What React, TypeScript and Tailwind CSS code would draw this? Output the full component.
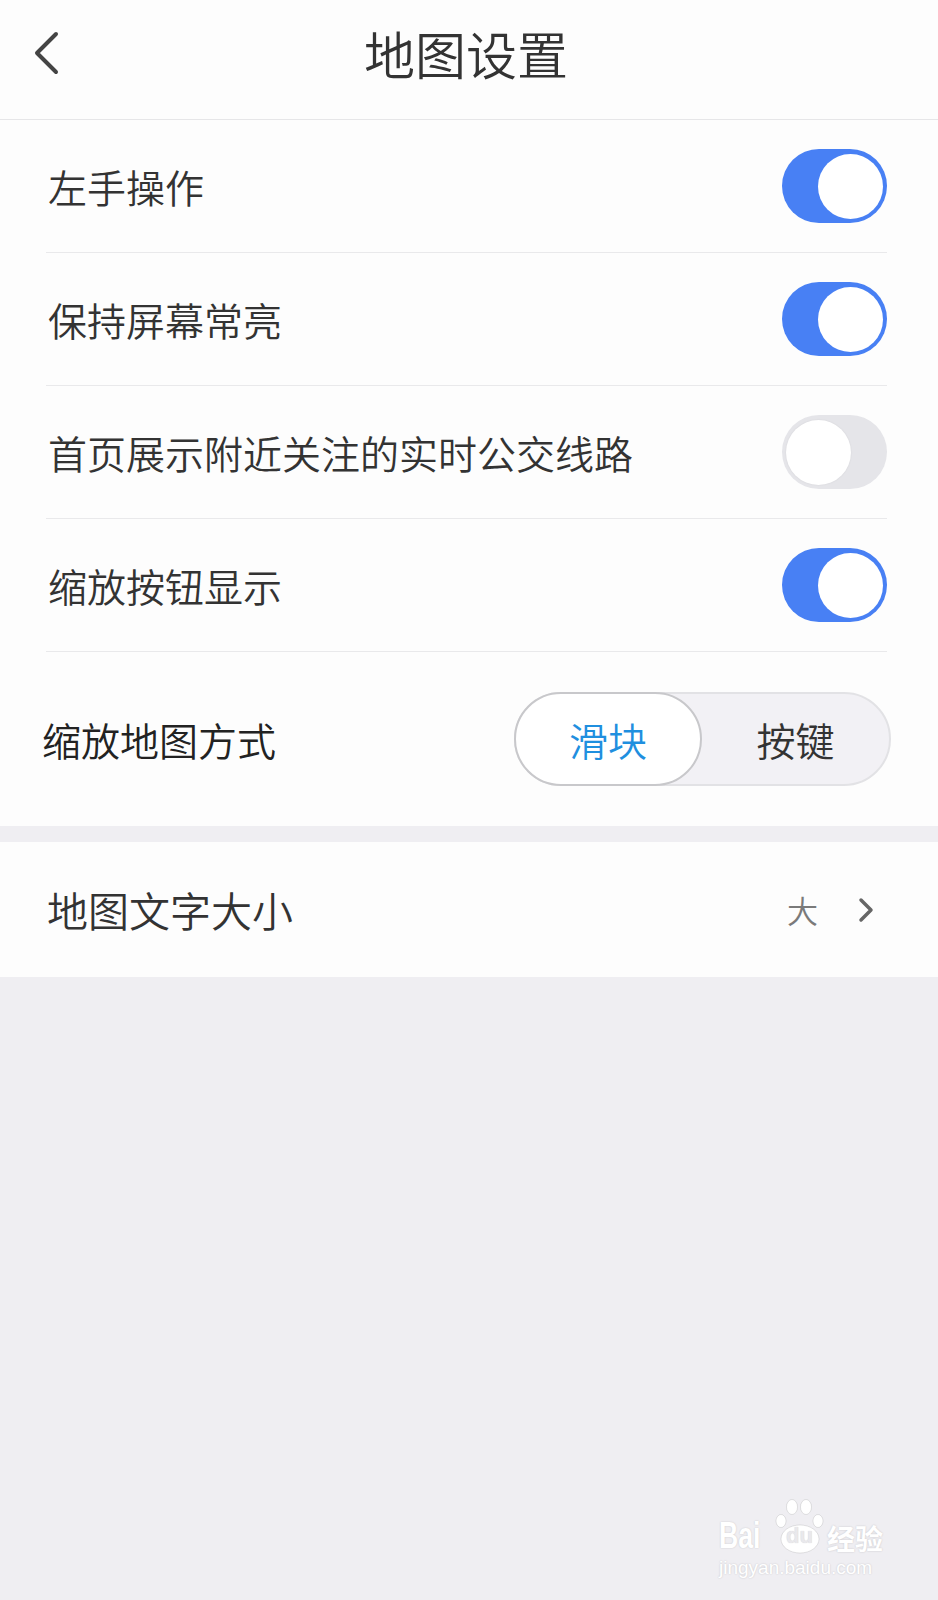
import React from "react";

function Toggle({ on }: { on: boolean }) {
  return on ? (
    <div className="w-[105px] h-[74px] rounded-full bg-[#4880f4] flex items-center justify-end pr-[4px]">
      <div className="w-[65px] h-[65px] rounded-full bg-white" />
    </div>
  ) : (
    <div className="w-[105px] h-[74px] rounded-full bg-[#e5e5e9] flex items-center justify-start pl-[4px]">
      <div className="w-[65px] h-[65px] rounded-full bg-white shadow-[0_0_2px_rgba(0,0,0,0.08)]" />
    </div>
  );
}

function ToggleRow({ label, on }: { label: string; on: boolean }) {
  return (
    <div className="h-[133px] flex items-center justify-between border-b border-[#e9e9eb]">
      <span className="text-[39px] leading-none text-[#333333] pl-[2px]">{label}</span>
      <Toggle on={on} />
    </div>
  );
}

export default function App() {
  return (
    <div className="w-full min-h-[1600px] bg-[#efeef2] font-['Noto_Sans_CJK_SC',sans-serif] font-[350] relative overflow-hidden">
      {/* Header */}
      <div className="h-[120px] bg-[#fdfdfd] border-b border-[#e6e6e8] relative flex items-center justify-center">
        <div className="absolute left-[32px] top-[31px]">
          <svg width="28" height="44" viewBox="0 0 28 44" fill="none">
            <path d="M24 3 L5 22 L24 41" stroke="#444444" strokeWidth="4" strokeLinecap="round" strokeLinejoin="round" />
          </svg>
        </div>
        <span className="text-[51px] leading-none text-[#333333] -mt-[12px] -ml-[6px]">地图设置</span>
      </div>

      {/* Section 1 */}
      <div className="bg-[#fdfdfd]">
        <div className="ml-[46px] mr-[51px]">
          <ToggleRow label="左手操作" on={true} />
          <ToggleRow label="保持屏幕常亮" on={true} />
          <ToggleRow label="首页展示附近关注的实时公交线路" on={false} />
          <ToggleRow label="缩放按钮显示" on={true} />
        </div>
        <div className="h-[174px] pl-[42px] pr-[47px] flex items-center justify-between">
          <span className="text-[39px] leading-none text-[#222222]">缩放地图方式</span>
          <div className="w-[377px] h-[94px] rounded-full bg-[#f2f1f5] border-2 border-[#e2e2e5] flex items-stretch">
            <div className="w-[188px] -my-[2px] -ml-[2px] rounded-full bg-white border-2 border-[#c8c8cb] flex items-center justify-center">
              <span className="text-[39px] leading-none text-[#1f8fdf]">滑块</span>
            </div>
            <div className="flex-1 flex items-center justify-center">
              <span className="text-[39px] leading-none text-[#333333]">按键</span>
            </div>
          </div>
        </div>
      </div>

      {/* gap */}
      <div className="h-[16px]" />

      {/* Section 2 */}
      <div className="bg-[#fdfdfd] h-[135px] pl-[47px] pr-[64px] flex items-center justify-between">
        <span className="text-[41px] leading-none text-[#333333]">地图文字大小</span>
        <div className="flex items-center gap-[40px]">
          <span className="text-[31px] leading-none text-[#7a7a7a]">大</span>
          <svg width="16" height="26" viewBox="0 0 16 26" fill="none">
            <path d="M3 3 L13 13 L3 23" stroke="#666666" strokeWidth="3.5" strokeLinecap="round" strokeLinejoin="round" />
          </svg>
        </div>
      </div>

      {/* Watermark */}
      <div className="absolute left-[719px] top-[1496px] flex flex-col items-start">
        <div className="flex items-end leading-none h-[58px]">
          <div className="w-[40px] h-[34px] relative">
            <span className="absolute left-0 bottom-0 text-[36px] leading-none font-bold text-white font-['Liberation_Sans',sans-serif] scale-x-[0.74] origin-left [text-shadow:0_0_2px_rgba(0,0,0,0.18)]">
              Bai
            </span>
          </div>
          <div className="relative w-[54px] h-[58px] ml-[14px]">
            <svg width="54" height="58" viewBox="0 0 54 58" className="absolute inset-0">
              <g fill="white" stroke="rgba(0,0,0,0.1)" strokeWidth="1">
                <ellipse cx="8" cy="25" rx="5" ry="6.5" />
                <ellipse cx="19" cy="11" rx="5.5" ry="7.5" />
                <ellipse cx="33" cy="11" rx="5.5" ry="7.5" />
                <ellipse cx="45" cy="25" rx="5" ry="6.5" />
                <ellipse cx="27" cy="43" rx="19" ry="14" />
              </g>
            </svg>
            <span className="absolute left-[13px] top-[29px] text-[22px] font-bold leading-none text-[#e9e8ec] font-['Liberation_Sans',sans-serif] [text-shadow:0_0_1px_rgba(0,0,0,0.2)]">
              du
            </span>
          </div>
          <span className="text-[28px] font-bold text-white ml-[0px] mb-[2px] [text-shadow:0_0_2px_rgba(0,0,0,0.18)]">经验</span>
        </div>
        <span className="text-[19px] leading-none text-white mt-[4px] font-['Liberation_Sans',sans-serif] [text-shadow:0_0_2px_rgba(0,0,0,0.18)]">
          jingyan.baidu.com
        </span>
      </div>
    </div>
  );
}
